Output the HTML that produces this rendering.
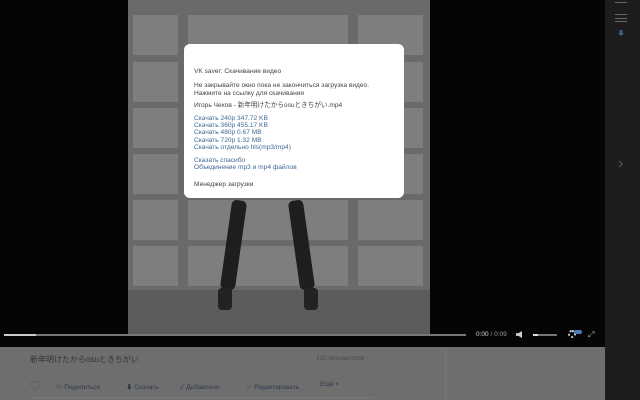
<!DOCTYPE html>
<html><head><meta charset="utf-8"><style>
*{margin:0;padding:0;box-sizing:border-box}
body{width:640px;height:400px;overflow:hidden;background:#050505;font-family:"Liberation Sans","Noto Sans CJK JP",sans-serif;position:relative}
.abs{position:absolute}
#video{left:128px;top:0;width:302px;height:345px;background:#6a6a6a;overflow:hidden}
.pane{position:absolute;background:#7e7e7e}
#dlg{left:184px;top:44px;width:220px;height:154px;background:#fff;border-radius:6px;font-size:6.6px;line-height:7.4px;color:#444;padding:24px 0 0 10px}
#dlg a{color:#3f6996;text-decoration:none;display:block}
#side{left:605px;top:0;width:35px;height:400px;background:#1d1d1d}
#panel{left:0;top:347px;width:605px;height:53px;background:#6e6e6e}
.t{color:#333;font-size:8px}
.b{font-size:6.5px;color:#2f3a4c}
</style></head><body>
<div id="video" class="abs">
 <div class="pane" style="left:5px;top:15px;width:45px;height:40px"></div>
 <div class="pane" style="left:5px;top:62px;width:45px;height:40px"></div>
 <div class="pane" style="left:5px;top:108px;width:45px;height:40px"></div>
 <div class="pane" style="left:5px;top:154px;width:45px;height:40px"></div>
 <div class="pane" style="left:5px;top:200px;width:45px;height:40px"></div>
 <div class="pane" style="left:5px;top:246px;width:45px;height:40px"></div>
 <div class="pane" style="left:230px;top:15px;width:65px;height:40px"></div>
 <div class="pane" style="left:230px;top:62px;width:65px;height:40px"></div>
 <div class="pane" style="left:230px;top:108px;width:65px;height:40px"></div>
 <div class="pane" style="left:230px;top:154px;width:65px;height:40px"></div>
 <div class="pane" style="left:230px;top:200px;width:65px;height:40px"></div>
 <div class="pane" style="left:230px;top:246px;width:65px;height:40px"></div>
 <div class="pane" style="left:60px;top:200px;width:160px;height:40px"></div>
 <div class="pane" style="left:60px;top:246px;width:160px;height:40px"></div>
 <div class="pane" style="left:60px;top:15px;width:160px;height:40px"></div>
 <div class="abs" style="left:0;top:290px;width:302px;height:55px;background:#5c5c5c"></div>
 <div class="abs" style="left:98px;top:200px;width:15px;height:90px;background:#1e1e1e;border-radius:5px;transform:rotate(8deg)"></div>
 <div class="abs" style="left:166px;top:200px;width:15px;height:90px;background:#1e1e1e;border-radius:5px;transform:rotate(-8deg)"></div>
 <div class="abs" style="left:90px;top:288px;width:14px;height:22px;background:#222;border-radius:4px"></div>
 <div class="abs" style="left:176px;top:288px;width:14px;height:22px;background:#222;border-radius:4px"></div>
</div>
<div class="abs" style="left:0;top:336px;width:605px;height:11px;background:#050505"></div>
<div class="abs" style="left:4px;top:334px;width:462px;height:2px;background:#777"></div>
<div class="abs" style="left:4px;top:334px;width:32px;height:2px;background:#ccc"></div>
<div class="abs" style="left:476px;top:331px;font-size:6.5px;color:#ddd">0:00 <span style="color:#999">/ 0:09</span></div>
<div class="abs" style="left:516px;top:331px;width:6px;height:7px;background:#ccc;clip-path:polygon(0 30%,40% 30%,100% 0,100% 100%,40% 70%,0 70%)"></div>
<div class="abs" style="left:533px;top:334px;width:24px;height:2px;background:#777"></div>
<div class="abs" style="left:533px;top:334px;width:5px;height:2px;background:#ddd"></div>
<div class="abs" style="left:568px;top:330px;width:8px;height:8px;border:2px dotted #ccc;border-radius:50%"></div>
<div class="abs" style="left:574px;top:330px;width:8px;height:4px;background:#4a78b8;border-radius:2px"></div>
<div class="abs" style="left:588px;top:330px;color:#bbb;font-size:8px">⤢</div>
<div id="dlg" class="abs">
 <div>VK saver: Скачивание видео</div>
 <div style="height:7px"></div>
 <div>Не закрывайте окно пока не закончиться загрузка видео.</div>
 <div>Нажмите на ссылку для скачивания</div>
 <div style="height:5px"></div>
 <div>Игорь Чехов - 新年明けたからosuときちがい.mp4</div>
 <div style="height:5px"></div>
 <a>Скачать 240p 347.72 KB</a><a>Скачать 360p 455.17 KB</a><a>Скачать 480p 0.67 MB</a><a>Скачать 720p 1.32 MB</a><a>Скачать отдельно hls(mp3/mp4)</a>
 <div style="height:5px"></div>
 <a>Сказать спасибо</a><a>Объединение mp3 и mp4 файлов</a>
 <div style="height:10px"></div>
 <div>Менеджер загрузки</div>
</div>
<div id="side" class="abs">
 <div class="abs" style="left:10px;top:2px;width:12px;height:1px;background:#666"></div>
 <div class="abs" style="left:10px;top:14px;width:12px;height:8px;border-top:1px solid #666;border-bottom:1px solid #666"></div>
 <div class="abs" style="left:10px;top:18px;width:12px;height:1px;background:#666"></div>
 <div class="abs" style="left:13px;top:30px;width:6px;height:6px;background:#3f5f88;clip-path:polygon(25% 0,75% 0,75% 50%,100% 50%,50% 100%,0 50%,25% 50%)"></div>
 <div class="abs" style="left:13px;top:155px;color:#555;font-size:16px">›</div>
</div>
<div id="panel" class="abs">
 <div class="abs" style="left:445px;top:0;width:1px;height:53px;background:#777"></div>
 <div class="abs t" style="left:30px;top:7px">新年明けたからosuときちがい</div>
 <div class="abs" style="left:316px;top:8px;font-size:6.5px;color:#4a4a4a">120 просмотров</div>
 <div class="abs" style="left:30px;top:31px;font-size:11px;color:#555">♡</div>
 <div class="abs b" style="left:56px;top:34px">⇨ Поделиться</div>
 <div class="abs b" style="left:126px;top:34px">⬇ Скачать</div>
 <div class="abs b" style="left:180px;top:34px">✓ Добавлено</div>
 <div class="abs b" style="left:246px;top:34px">╱ Редактировать</div>
 <div class="abs b" style="left:320px;top:34px">Ещё ˅</div>
 <div class="abs" style="left:30px;top:50px;width:345px;height:1px;background:#777"></div>
</div>
</body></html>
